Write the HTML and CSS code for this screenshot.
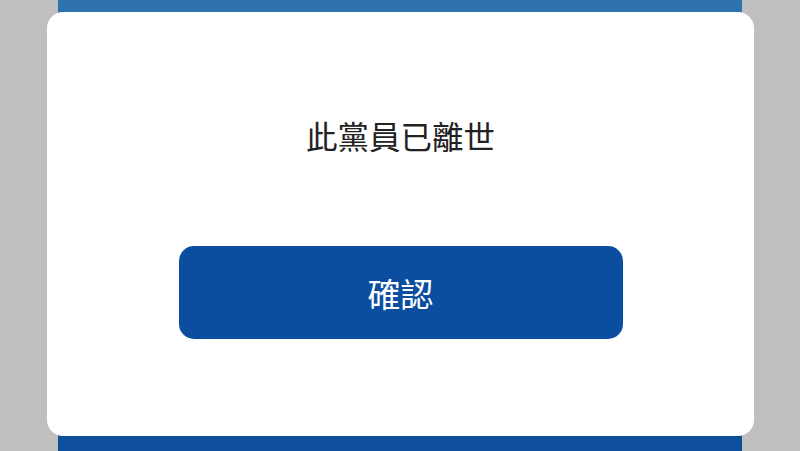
FILE: index.html
```html
<!DOCTYPE html>
<html lang="zh-Hant">
<head>
<meta charset="utf-8">
<title>此黨員已離世</title>
<link rel="stylesheet" href="styles.css">
</head>
<body>
<div class="page">
  <div class="page-header"></div>
  <div class="page-body"></div>
  <div class="page-footer"></div>
</div>
<div class="modal">
  <p class="modal-message">此黨員已離世</p>
  <button class="modal-button" type="button">確認</button>
</div>
</body>
</html>
```
FILE: styles.css
```css
html, body {
  margin: 0;
  padding: 0;
}
body {
  width: 800px;
  height: 451px;
  background: #bfbfbf;
  overflow: hidden;
  position: relative;
  font-family: "Noto Sans CJK TC", "Noto Sans", sans-serif;
}
.page {
  width: 684px;
  height: 451px;
  margin: 0 auto;
  display: flex;
  flex-direction: column;
  background: #ffffff;
}
.page-header {
  height: 14px;
  background: #2f73ae;
}
.page-body {
  flex: 1;
}
.page-footer {
  height: 16px;
  background: #0d4f9a;
}
.modal {
  position: absolute;
  left: 47px;
  top: 12px;
  width: 707px;
  height: 424px;
  background: #ffffff;
  border-radius: 16px;
  display: flex;
  flex-direction: column;
  align-items: center;
  box-sizing: border-box;
  padding-top: 101px;
}
.modal-message {
  margin: 0;
  font-size: 31.5px;
  line-height: 44px;
  color: #222222;
}
.modal-button {
  margin-top: 89px;
  width: 444px;
  height: 93px;
  border: none;
  border-radius: 15px;
  background: #0b4e9f;
  color: #ffffff;
  font-family: "Noto Sans CJK TC", "Noto Sans", sans-serif;
  font-size: 33px;
  padding: 0;
}
```
